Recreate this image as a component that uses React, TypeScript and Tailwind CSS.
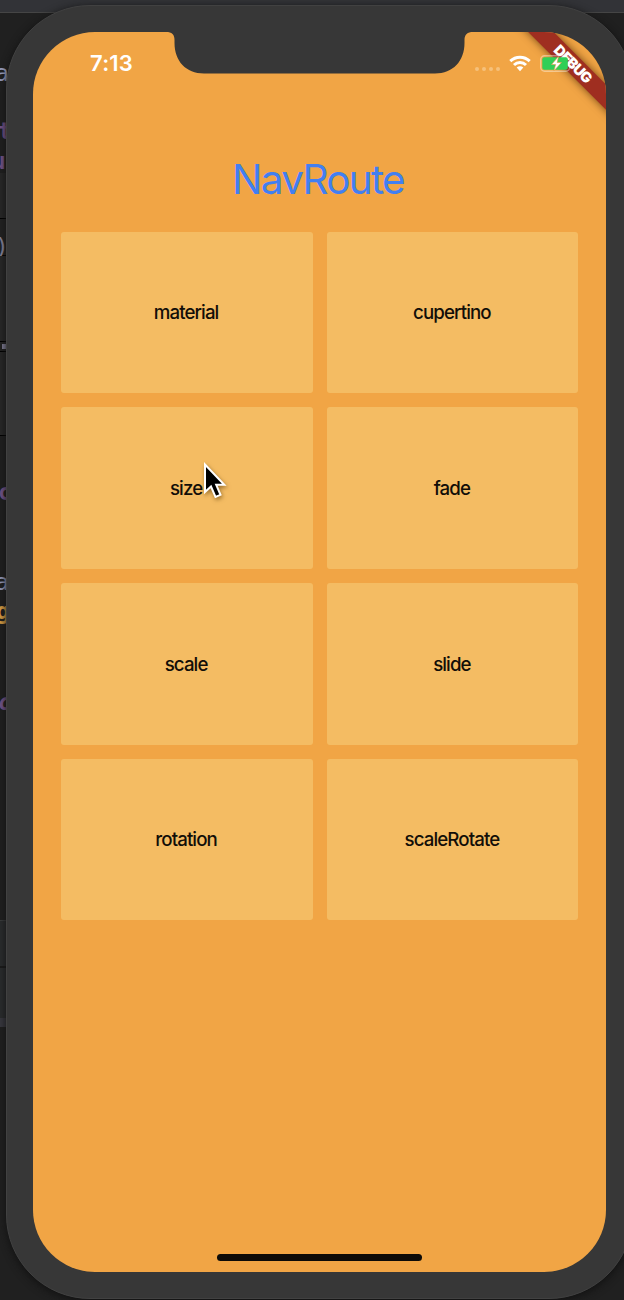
const routes = ["material", "cupertino", "size", "fade", "scale", "slide", "rotation", "scaleRotate"];

function EditorBackdrop() {
  const line = "h-6 w-4 text-[23px] leading-6";
  return (
    <div className="absolute inset-0 flex flex-col overflow-hidden bg-[#202020] font-['DejaVu_Sans_Mono',monospace]">
      <div className="h-[13px] border-b border-[#454545] bg-[#323337]" />
      <div className={`${line} -ml-[5px] mt-12 text-[#979dbc]`}>a</div>
      <div className={`${line} -ml-[2px] mt-[34px] font-bold text-[#76568c]`}>t</div>
      <div className={`${line} -ml-2 mt-1.5 font-bold text-[#76568c]`}>u</div>
      <div className="h-[45px] w-2 bg-[#282828]" />
      <div className="flex h-[38px] w-[6px] items-end border-y border-black bg-[#232323]">
        <span className={`${line} -ml-[5px] -mb-1 shrink-0 text-[#8b879d]`}>)</span>
      </div>
      <div className="h-[85px] w-2 bg-[#282828]" />
      <div className="flex h-[11px] w-[7px] items-center border-y border-black bg-[#232323]">
        <div className="ml-[2px] size-[5px] bg-[#85829b]" />
      </div>
      <div className="h-[84px] w-2 border-b border-black bg-[#282828]" />
      <div className={`${line} -ml-[2px] mt-11 font-bold text-[#76568c]`}>c</div>
      <div className={`${line} -ml-[5px] mt-[66px] text-[#979dbc]`}>a</div>
      <div className={`${line} -ml-[4px] mt-[5px] font-bold text-[#dca044]`}>g</div>
      <div className={`${line} -ml-[2px] mt-[67px] font-bold italic text-[#76568c]`}>c</div>
      <div className="mt-[206px] h-[46px] w-2 border-t border-[#3b3d3e] bg-[#2b2d2e]" />
      <div className="h-[52px] w-2 border-t-2 border-[#1b1b1b] bg-[#2b2d2e]" />
      <div className="h-[9px] w-2 bg-[#393940]" />
    </div>
  );
}

function Notch() {
  return (
    <svg className="absolute left-[132px] top-[-1px]" width="309" height="43" viewBox="0 0 309 43">
      <path
        d="M0 0H309V1H308C302.500 1 299.500 3.500 299.500 9V12C299.500 30 288 42.500 270 42.500H39C21 42.500 9.500 30 9.500 12V9C9.500 3.500 7 1 1 1H0Z"
        fill="#373737"
      />
    </svg>
  );
}

function SignalDots() {
  return (
    <div className="flex gap-[3px]">
      {[0, 1, 2, 3].map((n) => (
        <i key={n} className="size-[4px] rounded-full bg-[#f6c17b]" />
      ))}
    </div>
  );
}

function Wifi() {
  return (
    <svg width="22" height="17" viewBox="0 0 22 17" fill="none" stroke="#fff" strokeWidth="3">
      <path d="M1.300 6.200C6.800 .9 15.200 .9 20.700 6.200" />
      <path d="M5 10C8.400 6.700 13.600 6.700 17 10" />
      <path d="M7.700 12.600C9.500 10.900 12.500 10.900 14.300 12.600L11 16.200Z" fill="#fff" stroke="none" />
    </svg>
  );
}

function Battery() {
  return (
    <svg width="33" height="17" viewBox="0 0 33 17">
      <rect x=".7" y=".7" width="29" height="15.600" rx="4" fill="none" stroke="#fff" strokeOpacity=".4" strokeWidth="1.400" />
      <path d="M31 6Q32.500 8.500 31 11Z" fill="#fff" fillOpacity=".4" />
      <rect x="2.300" y="2.300" width="25.500" height="12.500" rx="2" fill="#30cf57" />
      <path d="M18.500 1.500L11.500 9.500H15.600L14 15.800L21.500 7.500H17.200Z" fill="#fff" stroke="#e39a43" strokeWidth=".6" />
    </svg>
  );
}

function StatusBar() {
  return (
    <div className="relative flex h-[63px] items-center justify-between pl-[57px] pr-[33px]">
      <span className="text-[22px] font-semibold tracking-[0.200px] text-white">7:13</span>
      <div className="flex items-center">
        <div className="mr-[9px] pt-[10px]"><SignalDots /></div>
        <div className="mr-[9px]"><Wifi /></div>
        <Battery />
      </div>
    </div>
  );
}

function DebugBanner() {
  return (
    <div className="absolute left-[460px] top-[23px] flex h-[17.500px] w-[160px] rotate-45 items-center justify-center bg-[#9f2e20] text-[14.500px] font-black tracking-[-0.800px] text-white shadow-[0_0_9px_rgba(70,35,0,0.750)]">
      DEBUG
    </div>
  );
}

function Cursor() {
  return (
    <svg
      className="absolute left-[143px] top-[55px] drop-shadow-[1px_2px_2px_rgba(80,50,0,0.550)]"
      width="24"
      height="38"
      viewBox="0 0 24 38"
    >
      <path
        d="M1 2.500V30L7 24.500L11.500 35L16.500 32.800L12.200 22.800H20.300Z"
        fill="#000"
        stroke="#fff"
        strokeWidth="2"
      />
    </svg>
  );
}

export default function App() {
  return (
    <main className="relative h-[1300px] w-[624px] overflow-hidden font-[Inter,sans-serif]">
      <EditorBackdrop />
      <div className="relative ml-[6px] h-[1300px] w-[627px] pt-[5px]">
        <div className="h-[1294px] rounded-[84px] border border-[#414141] bg-[#373737] p-[26px] shadow-[0_2px_8px_#111]">
          <div className="relative flex h-[1240px] w-[573px] flex-col overflow-hidden rounded-[62px] bg-[#f1a545]">
            <Notch />
            <DebugBanner />
            <StatusBar />
            <h1 className="mt-[60px] pr-[3px] text-center text-[40.500px] font-normal leading-[49px] tracking-[-1.750px] text-[#427ff2]">
              NavRoute
            </h1>
            <div className="mx-[27.700px] mt-[27.500px] grid grid-cols-2 gap-[14px]">
              {routes.map((route) => (
                <button
                  key={route}
                  className="relative h-[161.700px] rounded-[3px] bg-[#f4bc63] pr-[1px] pt-[2px] text-[18.700px] font-medium tracking-[-0.900px] text-[#120e08]"
                >
                  {route}
                  {route === "size" && <Cursor />}
                </button>
              ))}
            </div>
            <div className="mb-[11px] mt-auto h-[7px] w-[205px] self-center rounded-full bg-[#0d0b08]" />
          </div>
        </div>
      </div>
    </main>
  );
}
